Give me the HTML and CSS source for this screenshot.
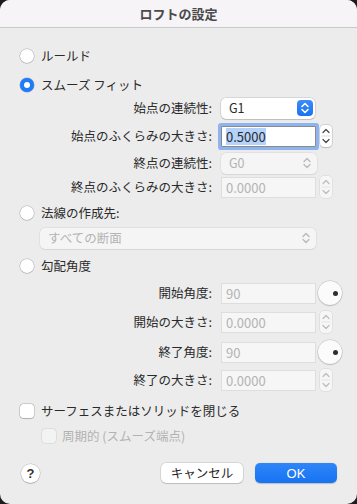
FILE: index.html
```html
<!DOCTYPE html>
<html lang="ja">
<head>
<meta charset="utf-8">
<title>ロフトの設定</title>
<link rel="stylesheet" href="styles.css">
</head>
<body>
<div class="window">
  <div class="titlebar">ロフトの設定</div>
  <div class="content">
    <div class="opt-row mt-18"><span class="radio"></span><span class="opt-label">ルールド</span></div>
    <div class="opt-row mt-9"><span class="radio on"></span><span class="opt-label">スムーズ フィット</span></div>

    <div class="field-row mt-2">
      <span class="label">始点の連続性:</span>
      <div class="popup">
        <span class="popup-text">G1</span>
        <span class="popup-arrows blue">
          <svg width="16" height="16" viewBox="0 0 16 16"><path d="M5 6.5 8 3.5 11 6.5M5 9.5 8 12.5 11 9.5" fill="none" stroke="#fff" stroke-width="1.6" stroke-linecap="round" stroke-linejoin="round"/></svg>
        </span>
      </div>
    </div>

    <div class="field-row mt-6">
      <span class="label">始点のふくらみの大きさ:</span>
      <div class="textfield focused"><span class="sel">0.5000</span></div>
      <div class="stepper">
        <svg width="12" height="22" viewBox="0 0 12 22"><path d="M3 7.5 6 4.5 9 7.5M3 14.5 6 17.5 9 14.5" fill="none" stroke="#444" stroke-width="1.2" stroke-linecap="round" stroke-linejoin="round"/><path d="M1.5 11h9" stroke="#ddd" stroke-width="1"/></svg>
      </div>
    </div>

    <div class="field-row mt-5">
      <span class="label">終点の連続性:</span>
      <div class="popup disabled">
        <span class="popup-text">G0</span>
        <span class="popup-arrows">
          <svg width="16" height="16" viewBox="0 0 16 16"><path d="M5 6.5 8 3.5 11 6.5M5 9.5 8 12.5 11 9.5" fill="none" stroke="#b8b8b8" stroke-width="1.3" stroke-linecap="round" stroke-linejoin="round"/></svg>
        </span>
      </div>
    </div>

    <div class="field-row mt-2">
      <span class="label">終点のふくらみの大きさ:</span>
      <div class="textfield disabled">0.0000</div>
      <div class="stepper disabled">
        <svg width="12" height="22" viewBox="0 0 12 22"><path d="M3 7.5 6 4.5 9 7.5M3 14.5 6 17.5 9 14.5" fill="none" stroke="#bbb" stroke-width="1.2" stroke-linecap="round" stroke-linejoin="round"/><path d="M1.5 11h9" stroke="#e6e6e6" stroke-width="1"/></svg>
      </div>
    </div>

    <div class="opt-row mt-5"><span class="radio"></span><span class="opt-label">法線の作成先:</span></div>

    <div class="wide-row mt-4">
      <div class="popup wide disabled">
        <span class="popup-text">すべての断面</span>
        <span class="popup-arrows">
          <svg width="16" height="16" viewBox="0 0 16 16"><path d="M5 6.5 8 3.5 11 6.5M5 9.5 8 12.5 11 9.5" fill="none" stroke="#b8b8b8" stroke-width="1.3" stroke-linecap="round" stroke-linejoin="round"/></svg>
        </span>
      </div>
    </div>

    <div class="opt-row mt-7"><span class="radio"></span><span class="opt-label">勾配角度</span></div>

    <div class="field-row tall mt-5">
      <span class="label">開始角度:</span>
      <div class="textfield disabled">90</div>
      <div class="dial"><span class="dial-dot"></span></div>
    </div>

    <div class="field-row mt-6">
      <span class="label">開始の大きさ:</span>
      <div class="textfield disabled">0.0000</div>
      <div class="stepper disabled">
        <svg width="12" height="22" viewBox="0 0 12 22"><path d="M3 7.5 6 4.5 9 7.5M3 14.5 6 17.5 9 14.5" fill="none" stroke="#bbb" stroke-width="1.2" stroke-linecap="round" stroke-linejoin="round"/><path d="M1.5 11h9" stroke="#e6e6e6" stroke-width="1"/></svg>
      </div>
    </div>

    <div class="field-row tall mt-7">
      <span class="label">終了角度:</span>
      <div class="textfield disabled">90</div>
      <div class="dial"><span class="dial-dot"></span></div>
    </div>

    <div class="field-row mt-5">
      <span class="label">終了の大きさ:</span>
      <div class="textfield disabled">0.0000</div>
      <div class="stepper disabled">
        <svg width="12" height="22" viewBox="0 0 12 22"><path d="M3 7.5 6 4.5 9 7.5M3 14.5 6 17.5 9 14.5" fill="none" stroke="#bbb" stroke-width="1.2" stroke-linecap="round" stroke-linejoin="round"/><path d="M1.5 11h9" stroke="#e6e6e6" stroke-width="1"/></svg>
      </div>
    </div>

    <div class="opt-row mt-10"><span class="checkbox"></span><span class="opt-label">サーフェスまたはソリッドを閉じる</span></div>
    <div class="opt-row sub mt-5"><span class="checkbox disabled"></span><span class="opt-label dim">周期的 (スムーズ端点)</span></div>

    <div class="button-row mt-17">
      <span class="help">?</span>
      <span class="spacer"></span>
      <span class="btn">キャンセル</span>
      <span class="btn primary">OK</span>
    </div>
  </div>
</div>
</body>
</html>
```

FILE: styles.css
```css
* { box-sizing: border-box; }

html, body {
  margin: 0;
  padding: 0;
  background: #1c1c1e;
}

body {
  width: 357px;
  height: 504px;
  font-family: "Noto Sans CJK JP", "Noto Sans", "Liberation Sans", sans-serif;
  font-size: 12.5px;
  color: #2a2a2a;
}

.window {
  width: 357px;
  height: 504px;
  background: #ececec;
  border-radius: 10px;
  overflow: hidden;
  display: flex;
  flex-direction: column;
}

.titlebar {
  height: 28px;
  flex: none;
  background: #f6f4f6;
  border-bottom: 1px solid #c9c9c9;
  display: flex;
  align-items: center;
  justify-content: center;
  font-weight: 700;
  font-size: 13px;
  color: #4a4a4a;
}

.content {
  display: flex;
  flex-direction: column;
}

.mt-2 { margin-top: 2px; }
.mt-4 { margin-top: 4px; }
.mt-5 { margin-top: 5px; }
.mt-6 { margin-top: 6px; }
.mt-7 { margin-top: 7px; }
.mt-9 { margin-top: 9px; }
.mt-10 { margin-top: 10px; }
.mt-17 { margin-top: 17px; }
.mt-18 { margin-top: 18px; }

/* radio / checkbox rows */
.opt-row {
  height: 20px;
  display: flex;
  align-items: center;
  padding-left: 20px;
  gap: 7px;
}
.opt-row.sub { padding-left: 42px; gap: 6px; }

.opt-label { line-height: 1; white-space: nowrap; }
.opt-label.dim { color: #b2b2b2; }

.radio {
  width: 14px;
  height: 14px;
  border-radius: 50%;
  background: #fff;
  box-shadow: 0 0 0 0.5px rgba(0,0,0,0.25), 0 0.5px 1px rgba(0,0,0,0.15);
  flex: none;
  display: flex;
  align-items: center;
  justify-content: center;
}
.radio.on {
  background: #1f7bf6;
  box-shadow: 0 0 0 0.5px rgba(0,60,160,0.4);
}
.radio.on::after {
  content: "";
  width: 6px;
  height: 6px;
  border-radius: 50%;
  background: #fff;
}

.checkbox {
  width: 14px;
  height: 14px;
  border-radius: 3.5px;
  background: #fff;
  box-shadow: 0 0 0 0.5px rgba(0,0,0,0.25), 0 0.5px 1px rgba(0,0,0,0.15);
  flex: none;
}
.checkbox.disabled {
  background: #f3f3f3;
  box-shadow: 0 0 0 0.5px rgba(0,0,0,0.12);
}

/* label : control rows */
.field-row {
  height: 22px;
  display: flex;
  align-items: center;
  gap: 9px;
}
.field-row.tall { height: 24px; }

.label {
  width: 212px;
  flex: none;
  text-align: right;
  white-space: nowrap;
  line-height: 1;
}

.popup {
  width: 94px;
  height: 21px;
  background: #fff;
  border-radius: 5px;
  box-shadow: 0 0 0 0.5px rgba(0,0,0,0.18), 0 1px 1px rgba(0,0,0,0.12);
  display: flex;
  align-items: center;
  justify-content: space-between;
  padding: 0 2px 0 8px;
  flex: none;
}
.popup.disabled {
  background: #f5f5f5;
  box-shadow: 0 0 0 0.5px rgba(0,0,0,0.08), 0 0.5px 1px rgba(0,0,0,0.05);
  color: #b3b3b3;
  width: 96px;
}
.popup.wide { width: 276px; }
.popup-text { line-height: 1; }

.popup-arrows {
  width: 16px;
  height: 16px;
  border-radius: 4px;
  display: flex;
}
.popup-arrows.blue {
  background: linear-gradient(#3d8cf8, #1a72f2);
}

.wide-row {
  height: 22px;
  display: flex;
  align-items: center;
  padding-left: 40px;
}

.textfield {
  width: 95px;
  height: 21px;
  background: #fff;
  border: 1px solid #c4c4c4;
  display: flex;
  align-items: center;
  padding-left: 4px;
  line-height: 1;
  flex: none;
  font-size: 13px;
}
.textfield.focused {
  border-color: #8a8a8a;
  box-shadow: 0 0 0 3px rgba(90,150,245,0.65);
  border-radius: 1px;
}
.textfield.disabled {
  background: #f6f6f6;
  border-color: #dedede;
  color: #b3b3b3;
}
.sel {
  background: #b4d2fa;
  padding: 2px 0;
}

.stepper {
  width: 12px;
  height: 22px;
  margin-left: -5px;
  background: #fff;
  border-radius: 4px;
  box-shadow: 0 0 0 0.5px rgba(0,0,0,0.2), 0 0.5px 1px rgba(0,0,0,0.12);
  display: flex;
  flex: none;
}
.stepper.disabled {
  background: #f6f6f6;
  box-shadow: 0 0 0 0.5px rgba(0,0,0,0.1);
}

.dial {
  width: 24px;
  height: 24px;
  margin-left: -7px;
  border-radius: 50%;
  background: #fbfbfb;
  box-shadow: 0 0 0 0.5px rgba(0,0,0,0.18), 0 1px 1.5px rgba(0,0,0,0.15);
  display: flex;
  align-items: center;
  justify-content: flex-end;
  padding-right: 4px;
  flex: none;
}
.dial-dot {
  width: 5px;
  height: 5px;
  border-radius: 50%;
  background: #2e2e2e;
}

/* buttons */
.button-row {
  height: 20px;
  display: flex;
  align-items: center;
  padding: 0 20px 0 21px;
  gap: 12px;
}
.spacer { flex: 1; }

.help {
  width: 19px;
  height: 19px;
  border-radius: 50%;
  background: #fff;
  box-shadow: 0 0 0 0.5px rgba(0,0,0,0.2), 0 1px 1px rgba(0,0,0,0.15);
  display: flex;
  align-items: center;
  justify-content: center;
  font-family: "Liberation Sans", sans-serif;
  font-weight: 700;
  font-size: 13px;
  color: #333;
}

.btn {
  width: 82px;
  height: 20px;
  border-radius: 5px;
  background: #fff;
  box-shadow: 0 0 0 0.5px rgba(0,0,0,0.18), 0 1px 1px rgba(0,0,0,0.12);
  display: flex;
  align-items: center;
  justify-content: center;
  line-height: 1;
  color: #262626;
}
.btn.primary {
  background: linear-gradient(#2f86f8, #1673f2);
  color: #fff;
  box-shadow: 0 0.5px 1px rgba(0,0,0,0.2);
  font-family: "Liberation Sans", "Noto Sans CJK JP", sans-serif;
  font-weight: 500;
  font-size: 13px;
}
```
